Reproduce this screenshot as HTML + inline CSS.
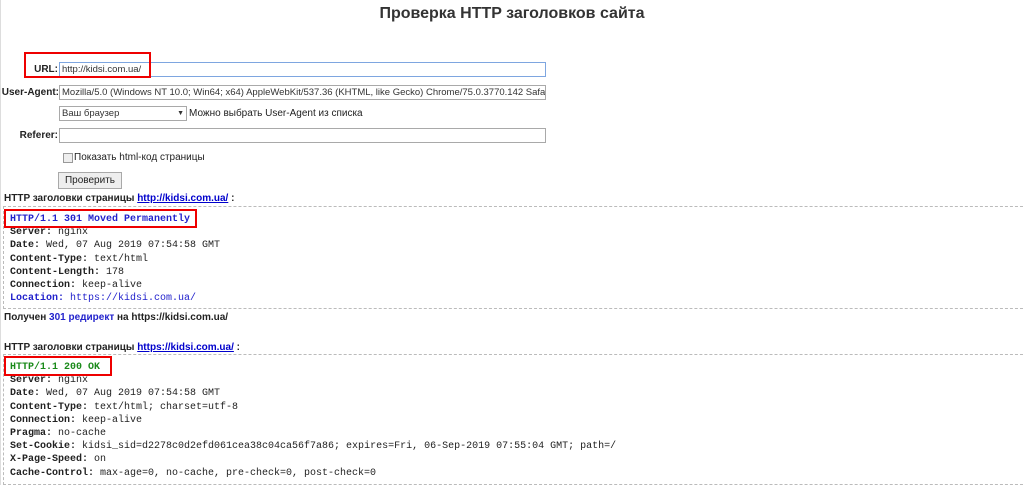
<!DOCTYPE html>
<html><head><meta charset="utf-8"><style>
body{margin:0;width:1024px;height:485px;overflow:hidden;background:#fff;font-family:"Liberation Sans",Arial,sans-serif;color:#222;position:relative}
.a{position:absolute;white-space:nowrap}
.l{font-size:10px;font-weight:bold;text-align:right;width:58px;left:0}
.in{position:absolute;border:1px solid #a9a9a9;height:13px;font-size:9.5px;line-height:13px;padding-left:2px;overflow:hidden;white-space:nowrap;color:#333;box-sizing:content-box}
.s{font-size:10px}
.b{font-weight:bold}
a{color:#00c;text-decoration:underline}
.box{position:absolute;left:3px;width:1030px;border:1px dashed #bbb;font-family:"Liberation Mono",monospace;font-size:10px;line-height:13.2px;padding:6px 0 0 6px;box-sizing:border-box;color:#222}
.box b{font-weight:bold}
.red{position:absolute;border:2px solid #e00;box-sizing:border-box}
</style></head><body>
<div style="position:absolute;left:0;top:0;width:1px;height:485px;background:#ddd"></div>
<div class="a" style="left:0;width:1024px;text-align:center;top:5px;font-size:16px;font-weight:bold;color:#333">Проверка HTTP заголовков сайта</div>

<div class="a l" style="top:64px">URL:</div>
<div class="in" style="left:59px;top:62px;width:483px;border-color:#7ea6e0">http://kidsi.com.ua/</div>
<div class="red" style="left:24px;top:52px;width:127px;height:26px"></div>

<div class="a l" style="top:87px;width:59px">User-Agent:</div>
<div class="in" style="left:59px;top:85px;width:483px">Mozilla/5.0 (Windows NT 10.0; Win64; x64) AppleWebKit/537.36 (KHTML, like Gecko) Chrome/75.0.3770.142 Safari/537.36</div>

<div class="in" style="left:59px;top:106px;width:124px;background:#fff">Ваш браузер<span style="position:absolute;right:2px;font-size:7px">▼</span></div>
<div class="a s" style="left:189px;top:108px">Можно выбрать User-Agent из списка</div>

<div class="a l" style="top:130px">Referer:</div>
<div class="in" style="left:59px;top:128px;width:483px"></div>

<div style="position:absolute;left:63px;top:153px;width:8px;height:8px;border:1px solid #999;background:#eee"></div>
<div class="a s" style="left:74px;top:152px">Показать html-код страницы</div>

<div style="position:absolute;left:58px;top:172px;width:62px;height:15px;border:1px solid #a9a9a9;background:#eee;font-size:10px;text-align:center;line-height:15px">Проверить</div>

<div class="a s b" style="left:4px;top:193px">HTTP заголовки страницы <a href="#">http://kidsi.com.ua/</a> :</div>
<div class="box" style="top:206px;height:103px">
<div style="color:#22c;font-weight:bold">HTTP/1.1 301 Moved Permanently</div>
<div><b>Server:</b> nginx</div>
<div><b>Date:</b> Wed, 07 Aug 2019 07:54:58 GMT</div>
<div><b>Content-Type:</b> text/html</div>
<div><b>Content-Length:</b> 178</div>
<div><b>Connection:</b> keep-alive</div>
<div style="color:#22c"><b>Location:</b> https://kidsi.com.ua/</div>
</div>
<div class="red" style="left:4px;top:209px;width:193px;height:19px"></div>

<div class="a s b" style="left:4px;top:312px">Получен <span style="color:#22c">301 редирект</span> на https://kidsi.com.ua/</div>

<div class="a s b" style="left:4px;top:342px">HTTP заголовки страницы <a href="#">https://kidsi.com.ua/</a> :</div>
<div class="box" style="top:354px;height:131px">
<div style="color:#1a8a1a;font-weight:bold">HTTP/1.1 200 OK</div>
<div><b>Server:</b> nginx</div>
<div><b>Date:</b> Wed, 07 Aug 2019 07:54:58 GMT</div>
<div><b>Content-Type:</b> text/html; charset=utf-8</div>
<div><b>Connection:</b> keep-alive</div>
<div><b>Pragma:</b> no-cache</div>
<div><b>Set-Cookie:</b> kidsi_sid=d2278c0d2efd061cea38c04ca56f7a86; expires=Fri, 06-Sep-2019 07:55:04 GMT; path=/</div>
<div><b>X-Page-Speed:</b> on</div>
<div><b>Cache-Control:</b> max-age=0, no-cache, pre-check=0, post-check=0</div>
</div>
<div class="red" style="left:4px;top:356px;width:108px;height:20px"></div>
</body></html>
